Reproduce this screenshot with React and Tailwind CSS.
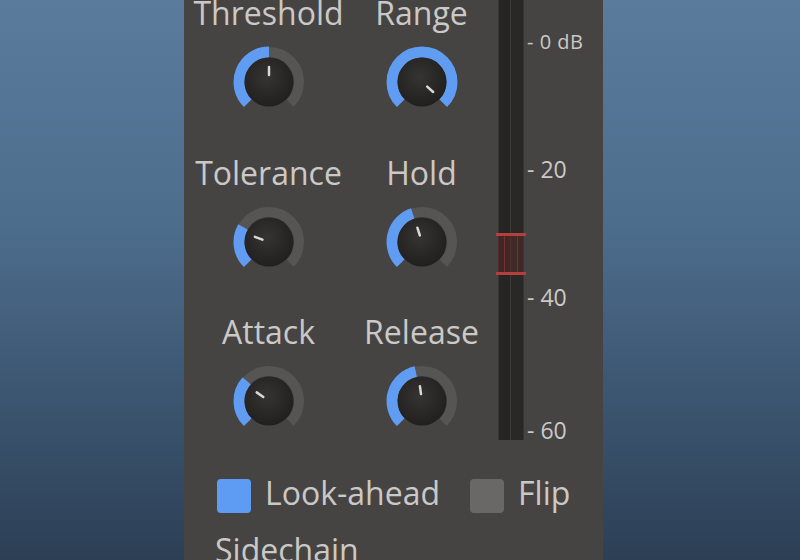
import React from 'react';

// Gate plugin panel: six knobs, a level meter with a threshold marker and two toggles.
const polar = (cx, cy, r, deg) => {
  const a = (deg * Math.PI) / 180;
  return [cx + r * Math.sin(a), cy - r * Math.cos(a)];
};

const arc = (cx, cy, r, from, to) => {
  const [x0, y0] = polar(cx, cy, r, from);
  const [x1, y1] = polar(cx, cy, r, to);
  const large = to - from > 180 ? 1 : 0;
  return `M ${x0} ${y0} A ${r} ${r} 0 ${large} 1 ${x1} ${y1}`;
};

const Knob = ({ value, pointer }) => {
  const [px0, py0] = polar(40, 40, 7, pointer);
  const [px1, py1] = polar(40, 40, 15, pointer);
  return (
    <svg width="80" height="80" viewBox="0 0 80 80">
      <defs>
        <radialGradient id="body" cx="45%" cy="40%" r="65%">
          <stop offset="0%" stopColor="#353432" />
          <stop offset="100%" stopColor="#1f1e1d" />
        </radialGradient>
      </defs>
      <path d={arc(40, 40, 30, -135, 135)} fill="none" stroke="#5a5856" strokeWidth="10" opacity="0.85" />
      <path d={arc(40, 40, 30, -135, value)} fill="none" stroke="#5f9cf2" strokeWidth="11" />
      <circle cx="40" cy="40" r="24.5" fill="url(#body)" />
      <line x1={px0} y1={py0} x2={px1} y2={py1} stroke="#d8d8d6" strokeWidth="2.5" strokeLinecap="round" />
    </svg>
  );
};

const knobs = [
  { label: 'Threshold', value: 0, pointer: 0 },
  { label: 'Range', value: 135, pointer: 132 },
  { label: 'Tolerance', value: -60, pointer: -70 },
  { label: 'Hold', value: -18, pointer: -18 },
  { label: 'Attack', value: -48, pointer: -55 },
  { label: 'Release', value: -12, pointer: -8 },
];

const Meter = () => (
  <div className="relative w-[26px] h-[445px] bg-[#2b2a28] flex">
    <div className="w-[12px] h-full bg-[#262523] border-l border-[#353432]" />
    <div className="w-[1px] h-full bg-[#3c3b39]" />
    <div className="flex-1 h-full bg-[#292826] border-r border-[#353432]" />
    <div className="absolute left-[-2px] right-[-2px] top-[238px] h-[42px] flex flex-col justify-between">
      <div className="h-[3px] bg-[#b53f3d]" />
      <div className="flex-1 mx-[2px] bg-[#5a2a29]/50 flex justify-around">
        <div className="w-[1px] bg-[#7a2f2e]" />
        <div className="w-[1px] bg-[#7a2f2e]" />
      </div>
      <div className="h-[3px] bg-[#b53f3d]" />
    </div>
  </div>
);

export default function App() {
  return (
    <div
      className="w-[800px] h-[560px] overflow-hidden bg-[linear-gradient(180deg,#5a7b9b_0%,#4d6d8d_40%,#2c3f55_100%)]"
      style={{ fontFamily: '"Open Sans", "Liberation Sans", sans-serif' }}
    >
      <div className="ml-[184px] w-[419px] h-full bg-[#464442] flex flex-col text-[#cac9c7]">
        <div className="flex mt-[-5px]">
          <div className="pl-[8px] grid grid-cols-[153px_153px] gap-y-[32px]">
            {knobs.map((k) => (
              <div key={k.label} className="flex flex-col items-center">
                <div className="h-[36px] leading-[36px] text-[32px]">{k.label}</div>
                <div className="mt-[11px]">
                  <Knob value={k.value} pointer={k.pointer} />
                </div>
              </div>
            ))}
          </div>
          <Meter />
          <div className="pl-[3px] flex flex-col text-[23px] leading-[24px]">
            <div className="mt-[35px] text-[20px] tracking-[0.5px]">- 0 dB</div>
            <div className="mt-[103px]">- 20</div>
            <div className="mt-[104px]">- 40</div>
            <div className="mt-[109px]">- 60</div>
          </div>
        </div>
        <div className="flex items-center mt-[29px] pl-[33px] h-[44px] text-[32px] leading-[44px]">
          <div className="w-[34px] h-[34px] mt-[6px] rounded-[4px] bg-[#5e9bf2]" />
          <span className="ml-[14px]">Look-ahead</span>
          <div className="ml-[30px] w-[34px] h-[34px] mt-[6px] rounded-[4px] bg-[#696866]" />
          <span className="ml-[14px]">Flip</span>
        </div>
        <div className="mt-[13px] pl-[31px] text-[32px] leading-[44px]">Sidechain</div>
      </div>
    </div>
  );
}
